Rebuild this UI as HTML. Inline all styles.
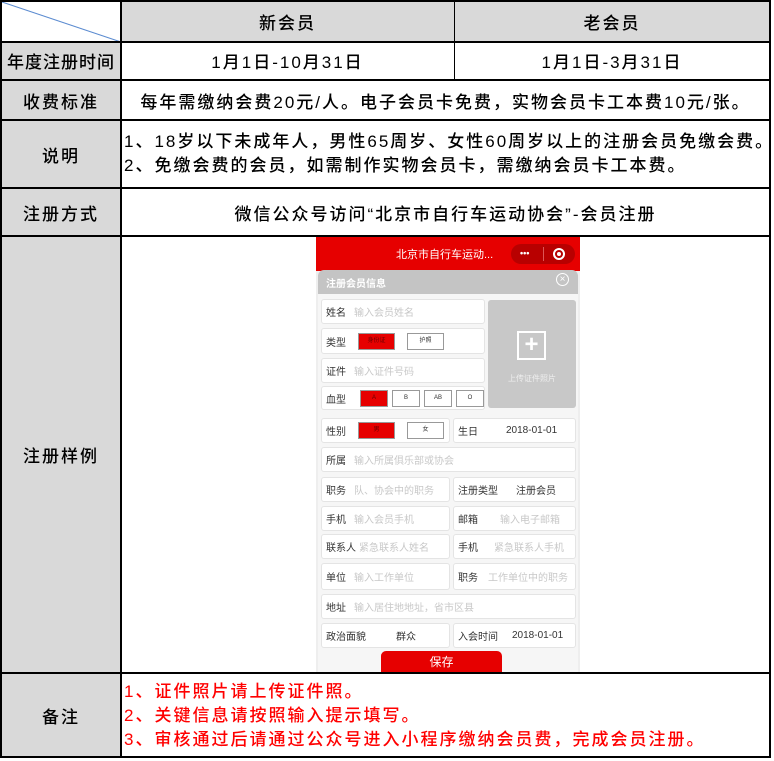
<!DOCTYPE html>
<html><head><meta charset="utf-8"><style>
*{margin:0;padding:0;box-sizing:border-box}
body{width:774px;height:761px;background:#fff;position:relative;overflow:hidden;font-family:"Liberation Sans","Noto Sans CJK SC",sans-serif;color:#000}
.a{position:absolute}
.c{position:absolute;display:flex;align-items:center;justify-content:center;font-size:17px;font-weight:500;letter-spacing:2px;white-space:nowrap}
.g{background:#d9d9d9}
.hl{position:absolute;height:2px;background:#000;left:0;width:771px}
.vl{position:absolute;width:2px;background:#000}
.bx{position:absolute;background:#fff;border:1px solid #e4e4e4;border-radius:3px;font-size:10px;color:#333;display:flex;align-items:center;padding-left:4px;white-space:nowrap}
.ph{color:#c8c8c8;margin-left:8px}
.rb{display:inline-block;background:#e60000;color:#600;border:1px solid #999;font-size:6px;text-align:center;line-height:15px;height:17px}
.wb{display:inline-block;background:#fff;color:#333;border:1px solid #999;font-size:6px;text-align:center;line-height:15px;height:17px}
.t{position:absolute;font-size:17px;font-weight:500;line-height:24px;letter-spacing:2px;white-space:nowrap}
</style></head><body>
<div class="a g" style="left:0;top:42px;width:121px;height:715px"></div>
<div class="a g" style="left:121px;top:1px;width:650px;height:41px"></div>
<svg class="a" style="left:0;top:0" width="122" height="43"><line x1="2" y1="2" x2="121" y2="42" stroke="#5b8bd0" stroke-width="1"/></svg>
<div class="hl" style="top:0"></div>
<div class="hl" style="top:41px"></div>
<div class="hl" style="top:79px"></div>
<div class="hl" style="top:119px"></div>
<div class="hl" style="top:187px"></div>
<div class="hl" style="top:235px"></div>
<div class="hl" style="top:672px"></div>
<div class="hl" style="top:756px"></div>
<div class="vl" style="left:0;top:0;height:758px"></div>
<div class="vl" style="left:120px;top:0;height:758px"></div>
<div class="vl" style="left:769px;top:0;height:758px"></div>
<div class="vl" style="left:454px;top:0;height:81px;width:1px"></div>
<div class="c" style="left:121px;top:1px;width:333px;height:40px">新会员</div>
<div class="c" style="left:455px;top:1px;width:314px;height:40px">老会员</div>
<div class="c" style="left:2px;top:42px;width:118px;height:37px;letter-spacing:1px">年度注册时间</div>
<div class="c" style="left:121px;top:42px;width:333px;height:37px">1月1日-10月31日</div>
<div class="c" style="left:455px;top:42px;width:314px;height:37px">1月1日-3月31日</div>
<div class="c" style="left:2px;top:81px;width:118px;height:38px">收费标准</div>
<div class="c" style="left:122px;top:81px;width:647px;height:38px">每年需缴纳会费20元/人。电子会员卡免费，实物会员卡工本费10元/张。</div>
<div class="c" style="left:2px;top:121px;width:118px;height:66px">说明</div>
<div class="t" style="left:124px;top:130px">1、18岁以下未成年人，男性65周岁、女性60周岁以上的注册会员免缴会费。<br>2、免缴会费的会员，如需制作实物会员卡，需缴纳会员卡工本费。</div>
<div class="c" style="left:2px;top:189px;width:118px;height:46px">注册方式</div>
<div class="c" style="left:122px;top:189px;width:647px;height:46px">微信公众号访问“北京市自行车运动协会”-会员注册</div>
<div class="c" style="left:2px;top:237px;width:118px;height:435px">注册样例</div>
<div class="c" style="left:2px;top:674px;width:118px;height:82px">备注</div>
<div class="t" style="left:124px;top:680px;color:#f00">1、证件照片请上传证件照。<br>2、关键信息请按照输入提示填写。<br>3、审核通过后请通过公众号进入小程序缴纳会员费，完成会员注册。</div>

<div class="a" style="left:316px;top:237px;width:264px;height:435px;background:#eee;overflow:hidden">
 <div class="a" style="left:0;top:0;width:264px;height:34px;background:#e60000"></div>
 <div class="a" style="left:80px;top:9px;font-size:11px;color:#fff">北京市自行车运动...</div>
 <div class="a" style="left:195px;top:7px;width:64px;height:20px;border-radius:10px;background:#b80000"></div>
 <div class="a" style="left:204px;top:11px;font-size:9px;color:#fff;font-weight:bold">•••</div>
 <div class="a" style="left:227px;top:10px;width:1px;height:14px;background:#d55"></div>
 <div class="a" style="left:237px;top:11px;width:12px;height:12px;border-radius:50%;border:2px solid #fff"></div>
 <div class="a" style="left:241px;top:15px;width:4px;height:4px;border-radius:50%;background:#fff"></div>
 <div class="a" style="left:2px;top:33px;width:260px;height:24px;background:#c4c4c4;border-radius:6px 6px 0 0"></div>
 <div class="a" style="left:10px;top:38px;font-size:10px;color:#fff;font-weight:bold">注册会员信息</div>
 <div class="a" style="left:240px;top:36px;width:13px;height:13px;border-radius:50%;border:1px solid #fff;color:#fff;font-size:10px;line-height:11px;text-align:center">×</div>
 <div class="a" style="left:2px;top:57px;width:260px;height:380px;background:#f6f6f6"></div>
</div>
<div class="bx" style="left:321px;top:299px;width:164px;height:25px">姓名<span class="ph">输入会员姓名</span></div>
<div class="bx" style="left:321px;top:328px;width:164px;height:26px">类型<span class="rb" style="margin-left:12px;width:37px">身份证</span><span class="wb" style="margin-left:12px;width:37px">护照</span></div>
<div class="bx" style="left:321px;top:358px;width:164px;height:25px">证件<span class="ph">输入证件号码</span></div>
<div class="bx" style="left:321px;top:386px;width:164px;height:24px">血型<span class="rb" style="margin-left:14px;width:29px">A</span><span class="wb" style="margin-left:4px;width:29px">B</span><span class="wb" style="margin-left:4px;width:29px">AB</span><span class="wb" style="margin-left:4px;width:29px">O</span></div>
<div class="a" style="left:488px;top:300px;width:88px;height:108px;background:#c8c8c8;border-radius:3px"></div>
<div class="a" style="left:517px;top:331px;width:29px;height:29px;border:2px solid #fff;color:#fff;font-size:24px;line-height:24px;text-align:center;font-weight:bold">+</div>
<div class="a" style="left:488px;top:373px;width:88px;text-align:center;font-size:8px;color:#eee">上传证件照片</div>
<div class="bx" style="left:321px;top:418px;width:129px;height:25px">性别<span class="rb" style="margin-left:12px;width:37px">男</span><span class="wb" style="margin-left:12px;width:37px">女</span></div>
<div class="bx" style="left:453px;top:418px;width:123px;height:25px">生日<span style="margin-left:28px">2018-01-01</span></div>
<div class="bx" style="left:321px;top:447px;width:255px;height:25px">所属<span class="ph">输入所属俱乐部或协会</span></div>
<div class="bx" style="left:321px;top:477px;width:129px;height:25px">职务<span class="ph">队、协会中的职务</span></div>
<div class="bx" style="left:453px;top:477px;width:123px;height:25px">注册类型<span style="margin-left:18px">注册会员</span></div>
<div class="bx" style="left:321px;top:506px;width:129px;height:25px">手机<span class="ph">输入会员手机</span></div>
<div class="bx" style="left:453px;top:506px;width:123px;height:25px">邮箱<span class="ph" style="margin-left:22px">输入电子邮箱</span></div>
<div class="bx" style="left:321px;top:534px;width:129px;height:25px">联系人<span class="ph" style="margin-left:3px">紧急联系人姓名</span></div>
<div class="bx" style="left:453px;top:534px;width:123px;height:25px">手机<span class="ph" style="margin-left:16px">紧急联系人手机</span></div>
<div class="bx" style="left:321px;top:563px;width:129px;height:27px">单位<span class="ph">输入工作单位</span></div>
<div class="bx" style="left:453px;top:563px;width:123px;height:27px">职务<span class="ph" style="margin-left:10px">工作单位中的职务</span></div>
<div class="bx" style="left:321px;top:594px;width:255px;height:25px">地址<span class="ph">输入居住地地址，省市区县</span></div>
<div class="bx" style="left:321px;top:623px;width:129px;height:25px">政治面貌<span style="margin-left:30px">群众</span></div>
<div class="bx" style="left:453px;top:623px;width:123px;height:25px">入会时间<span style="margin-left:14px">2018-01-01</span></div>
<div class="a" style="left:381px;top:651px;width:121px;height:21px;background:#e60000;border-radius:5px 5px 0 0;color:#fff;font-size:12px;text-align:center;line-height:22px">保存</div>
</body></html>
